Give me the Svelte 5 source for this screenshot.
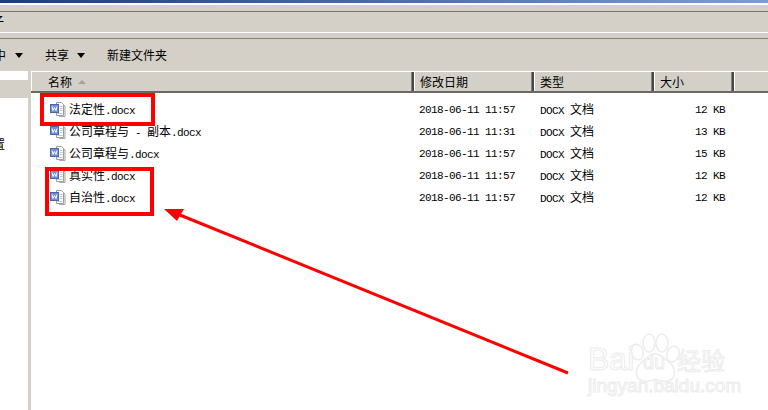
<script>
  const columns = [
    { label: '名称', width: 383, sort: true },
    { label: '修改日期', width: 120 },
    { label: '类型', width: 120 },
    { label: '大小', width: 80 },
  ]

  const files = [
    { name: '法定性.docx', date: '2018-06-11 11:57', size: '12 KB' },
    { name: '公司章程与 - 副本.docx', date: '2018-06-11 11:31', size: '13 KB' },
    { name: '公司章程与.docx', date: '2018-06-11 11:57', size: '15 KB' },
    { name: '真实性.docx', date: '2018-06-11 11:57', size: '12 KB' },
    { name: '自治性.docx', date: '2018-06-11 11:57', size: '12 KB' },
  ]

  // chinese runs are 12px, latin runs mono at 6px a char, same as the old bitmap font widths
  const runs = (text) => text.split(/([\u4e00-\u9fff]+)/).filter(Boolean)
  const isCn = (text) => /[\u4e00-\u9fff]/.test(text)
</script>

<div class="page">
  <div class="titlebar"></div>
  <div class="menubar"><span class="menu-cut">子</span></div>

  <div class="toolbar">
    <span class="tool first">中</span>
    <span class="caret first-caret"></span>
    <span class="tool share">共享</span>
    <span class="caret"></span>
    <span class="tool newdir">新建文件夹</span>
  </div>

  <div class="main">
    <div class="nav">
      <div class="nav-top"></div>
      <div class="nav-selected"></div>
      <div class="nav-label">置</div>
    </div>
    <div class="splitter"></div>
    <div class="list">
      <div class="header">
        {#each columns as col}
          <div class="col" style="width: {col.width}px">
            {col.label}
            {#if col.sort}
              <span class="sort"></span>
            {/if}
          </div>
        {/each}
        <div class="col-rest"></div>
      </div>

      <div class="rows">
        {#each files as file}
          <div class="row">
            <div class="cell name">
              <svg class="icon" width="16" height="16" viewBox="0 0 16 16">
                <path d="M9.500 2.500h4l1.500 1.500v10.500h-5.500z" fill="#f2f2f2" stroke="#a8a8a8" />
                <path d="M6.500 .5h5l2 2v11h-7z" fill="#fcfcfc" stroke="#9a9da3" />
                <path d="M10 4.500h2.500M10 6.500h2.500M10 8.500h2.500M7.500 11.500h5" stroke="#c0c4cc" />
                <rect x="0.500" y="2.500" width="8" height="8" fill="#6f8fd6" stroke="#4a66b0" />
                <path d="M2 4.500l1 4 1.500-3 1.500 3 1-4" fill="none" stroke="#fff" />
              </svg>
              <span class="fname">
                {#each runs(file.name) as run}
                  <span class:cn={isCn(run)}>{run}</span>
                {/each}
              </span>
            </div>
            <div class="cell date">{file.date}</div>
            <div class="cell type">DOCX <span class="cn">文档</span></div>
            <div class="cell size">{file.size}</div>
          </div>
        {/each}
      </div>
    </div>
  </div>

  <!-- hand drawn annotations on top of the screenshot -->
  <div class="mark mark-one"></div>
  <div class="mark mark-two"></div>
  <svg class="arrow" width="768" height="410" viewBox="0 0 768 410">
    <line x1="568" y1="373" x2="175" y2="213" stroke="#ff0000" stroke-width="3" />
    <polygon points="164,209 184,209 177,221" fill="#ff0000" />
  </svg>

  <div class="watermark">
    <svg class="paw" width="64" height="58" viewBox="0 0 64 58">
      <g fill="#fff" stroke="#ececec" stroke-width="1.500">
        <ellipse cx="13" cy="21" rx="6" ry="8" transform="rotate(-20 13 21)" />
        <ellipse cx="25" cy="12" rx="6" ry="9" />
        <ellipse cx="38" cy="12" rx="6" ry="9" />
        <ellipse cx="49" cy="23" rx="6" ry="8" transform="rotate(20 49 23)" />
        <path d="M31 23c-7 0-10 6-15 10-5 5-5 15 3 17 5 1 8-1 12-1s8 2 13 1c8-2 8-12 3-17-5-4-9-10-16-10z" />
      </g>
    </svg>
    <span class="wm-bai">Bai</span>
    <span class="wm-du">du</span>
    <span class="wm-cn">经验</span>
    <span class="wm-url">jingyan.baidu.com</span>
  </div>
</div>

<style>
  :global(body) {
    margin: 0;
    background: #fff;
  }

  .page {
    position: relative;
    width: 768px;
    height: 410px;
    overflow: hidden;
    background: #fff;
    font-family: "Noto Sans CJK SC", "Liberation Sans", sans-serif;
    font-size: 12px;
    color: #000;
  }

  .titlebar {
    height: 3px;
    background: linear-gradient(to right, #1c3c7c, #7b9fd2);
    border-bottom: 2px solid #fff;
  }

  .menubar {
    height: 27px;
    background: linear-gradient(#d4d0c8 6px, #77746f 6px, #77746f 7px, #d4d0c8 7px);
    border-bottom: 1px solid #fff;
    overflow: hidden;
  }

  .menu-cut {
    display: block;
    margin: 8px 0 0 -8px;
    line-height: 16px;
  }

  .toolbar {
    height: 38px;
    box-sizing: border-box;
    background: linear-gradient(#d4d0c8 5px, #85827c 5px, #85827c 6px, #d4d0c8 6px);
    padding-top: 6px;
    display: flex;
    align-items: center;
    overflow: hidden;
  }

  .tool {
    line-height: 16px;
  }

  .first {
    margin-left: -6px;
  }

  .caret {
    width: 0;
    height: 0;
    margin-left: 8px;
    border-left: 4px solid transparent;
    border-right: 4px solid transparent;
    border-top: 5px solid #000;
  }

  .first-caret {
    margin-left: 9px;
  }

  .share {
    margin-left: 22px;
  }

  .newdir {
    margin-left: 22px;
  }

  .main {
    display: flex;
    height: 339px;
  }

  .nav {
    width: 28px;
    overflow: hidden;
    background: #fff;
  }

  .nav-top {
    height: 9px;
  }

  .nav-selected {
    height: 18px;
    background: #d4d0c8;
  }

  .nav-label {
    margin: 39px 0 0 -7px;
    line-height: 14px;
  }

  .splitter {
    width: 3px;
    background: #d4d0c8;
  }

  .list {
    flex: 1;
    min-width: 0;
    background: #fff;
  }

  .header {
    display: flex;
    height: 19px;
    background: #d4d0c8;
    border-top: 1px solid #fff;
    border-bottom: 2px solid #6b6964;
  }

  .col {
    box-sizing: border-box;
    display: flex;
    align-items: center;
    padding: 1px 0 0 6px;
    border-right: 2px solid #4a4a48;
    box-shadow: inset -1px 0 0 #808080, inset 1px 0 0 #fff;
    line-height: 16px;
  }

  .col:first-child {
    padding-left: 17px;
  }

  .col-rest {
    flex: 1;
    box-shadow: inset 1px 0 0 #fff;
  }

  .sort {
    width: 0;
    height: 0;
    margin-left: 6px;
    border-left: 4px solid transparent;
    border-right: 4px solid transparent;
    border-bottom: 4px solid #a5a29b;
  }

  .rows {
    padding-top: 6px;
  }

  .row {
    display: flex;
    height: 22px;
    align-items: center;
  }

  .cell {
    font-family: "Liberation Mono", "Noto Sans CJK SC", monospace;
    font-size: 11px;
    letter-spacing: -0.6px;
    line-height: 14px;
    white-space: pre;
  }

  .cn {
    font-family: "Noto Sans CJK SC", sans-serif;
    font-size: 12px;
    letter-spacing: 0;
  }

  .name {
    width: 388px;
    display: flex;
    align-items: center;
    padding-left: 19px;
    box-sizing: border-box;
  }

  .icon {
    flex: none;
    margin-right: 3px;
  }

  .fname {
    display: flex;
    white-space: pre;
    align-items: baseline;
  }

  .date {
    width: 121px;
  }

  .type {
    width: 135px;
  }

  .size {
    width: 50px;
    text-align: right;
  }

  .mark {
    position: absolute;
    box-sizing: border-box;
    border: 4px solid #ff0000;
  }

  .mark-one {
    left: 40px;
    top: 93px;
    width: 115px;
    height: 33px;
  }

  .mark-two {
    left: 45px;
    top: 167px;
    width: 109px;
    height: 49px;
  }

  .arrow {
    position: absolute;
    left: 0;
    top: 0;
  }

  .watermark {
    position: absolute;
    left: 585px;
    top: 330px;
    width: 150px;
    height: 70px;
    font-family: "Liberation Sans", sans-serif;
    color: #fff;
    -webkit-text-stroke: 1px #ececec;
  }

  .watermark span {
    position: absolute;
    white-space: nowrap;
  }

  .paw {
    position: absolute;
    left: 39px;
    top: 1px;
  }

  .wm-bai {
    left: 3px;
    top: 11px;
    font-size: 32px;
    line-height: 36px;
  }

  .wm-du {
    left: 58px;
    top: 21px;
    font-size: 20px;
    line-height: 22px;
  }

  .wm-cn {
    left: 92px;
    top: 14px;
    font-size: 24px;
    line-height: 32px;
    font-family: "Noto Sans CJK SC", sans-serif;
  }

  .wm-url {
    left: 3px;
    top: 46px;
    font-size: 19px;
    line-height: 20px;
  }
</style>
